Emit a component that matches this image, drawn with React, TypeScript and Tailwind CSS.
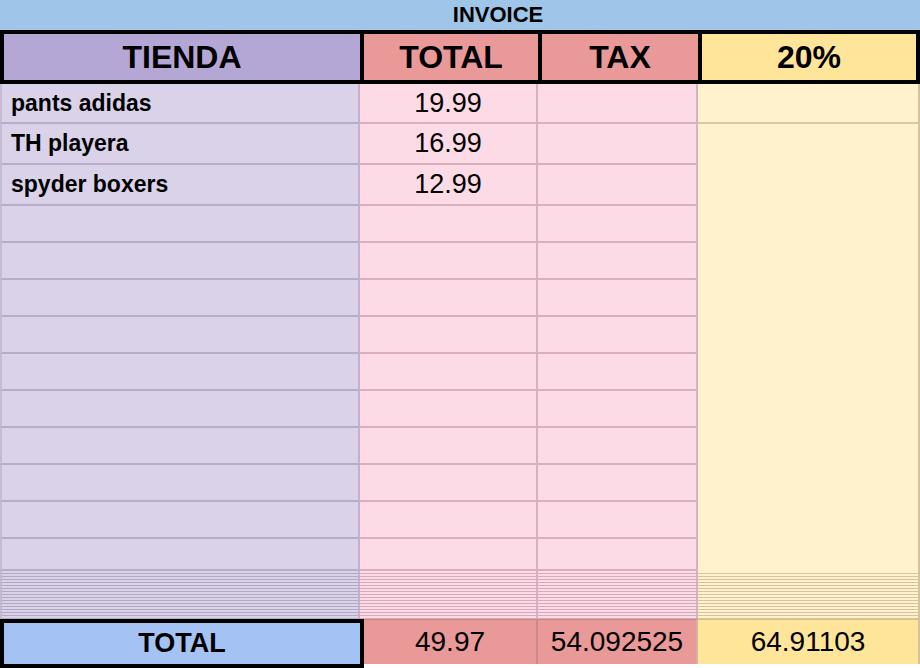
import React from 'react';

const items = [
  { name: 'pants adidas', total: '19.99' },
  { name: 'TH playera', total: '16.99' },
  { name: 'spyder boxers', total: '12.99' },
];

const emptyRows = 10;
const denseRows = 16;

const Row: React.FC<{ h: string; name?: string; total?: string; yellowLine?: boolean }> = ({ h, name, total, yellowLine }) => (
  <div className={`flex ${h}`}>
    <div className="w-[360px] bg-[#d9d2e9] border-l-2 border-r-2 border-b-2 border-l-[#c4bcd3] border-r-[#c6b0c9] border-b-[#b8adc9] flex items-center pl-[9px] font-bold text-[23px] leading-none">
      {name}
    </div>
    <div className="w-[178px] bg-[#fcdbe7] border-r-2 border-b-2 border-r-[#d3b3c2] border-b-[#d9afc0] flex items-center justify-center text-[27px] leading-none">
      {total}
    </div>
    <div className="w-[160px] bg-[#fcdbe7] border-r-2 border-b-2 border-r-[#d3b3c2] border-b-[#d9afc0]" />
    <div
      className={`w-[222px] bg-[#fff2cc] border-r-2 border-r-[#d6c29c] ${
        yellowLine ? 'border-b-2 border-b-[#d9c7a2]' : ''
      }`}
    />
  </div>
);

const DenseRow: React.FC = () => (
  <div className="flex h-[3px]">
    <div className="w-[360px] bg-[#d9d2e9] border-l-2 border-r-2 border-b border-l-[#c4bcd3] border-r-[#c6b0c9] border-b-[#b3a9c4]" />
    <div className="w-[178px] bg-[#fcdbe7] border-r-2 border-b border-r-[#d3b3c2] border-b-[#d6a9bb]" />
    <div className="w-[160px] bg-[#fcdbe7] border-r-2 border-b border-r-[#d3b3c2] border-b-[#d6a9bb]" />
    <div className="w-[222px] bg-[#fff2cc] border-r-2 border-b border-r-[#d6c29c] border-b-[#d8c39c]" />
  </div>
);

export default function App() {
  return (
    <div className="w-[920px] h-[668px] overflow-hidden bg-white text-black font-['Liberation_Sans',Arial,sans-serif]">
      <div className="h-[30px] bg-[#9fc5e8] flex items-center justify-center pl-[76px] font-bold text-[22px] leading-none">
        INVOICE
      </div>

      <div className="flex h-[54px] border-y-4 border-black font-bold text-[32px] leading-none">
        <div className="w-[360px] bg-[#b4a7d6] border-l-4 border-black flex items-center justify-center">TIENDA</div>
        <div className="w-[178px] bg-[#ea9999] border-l-4 border-black flex items-center justify-center">TOTAL</div>
        <div className="w-[160px] bg-[#ea9999] border-l-4 border-black flex items-center justify-center">TAX</div>
        <div className="w-[222px] bg-[#ffe599] border-x-4 border-black flex items-center justify-center">20%</div>
      </div>

      <Row h="h-[40px]" name={items[0].name} total={items[0].total} yellowLine />
      <Row h="h-[41px]" name={items[1].name} total={items[1].total} />
      <Row h="h-[41px]" name={items[2].name} total={items[2].total} />
      {Array.from({ length: emptyRows }).map((_, i) => (
        <Row key={i} h={i === emptyRows - 1 ? 'h-[32px]' : 'h-[37px]'} />
      ))}
      {Array.from({ length: denseRows }).map((_, i) => (
        <DenseRow key={i} />
      ))}

      <div className="flex h-[49px] text-[28px] leading-none">
        <div className="w-[364px] bg-[#a4c2f4] border-4 border-black flex items-center justify-center font-bold text-[27px]">
          TOTAL
        </div>
        <div className="w-[174px] h-[45px] bg-[#ea9999] border-t border-r-2 border-t-[#c98585] border-r-[#c98a8a] flex items-center justify-center">
          49.97
        </div>
        <div className="w-[160px] h-[45px] bg-[#ea9999] border-t border-r-2 border-t-[#c98585] border-r-[#d3b3a0] flex items-center justify-center">
          54.092525
        </div>
        <div className="w-[222px] h-[45px] bg-[#ffe599] border-t border-r-2 border-t-[#d6c08a] border-r-[#d6c29c] flex items-center justify-center">
          64.91103
        </div>
      </div>
    </div>
  );
}
